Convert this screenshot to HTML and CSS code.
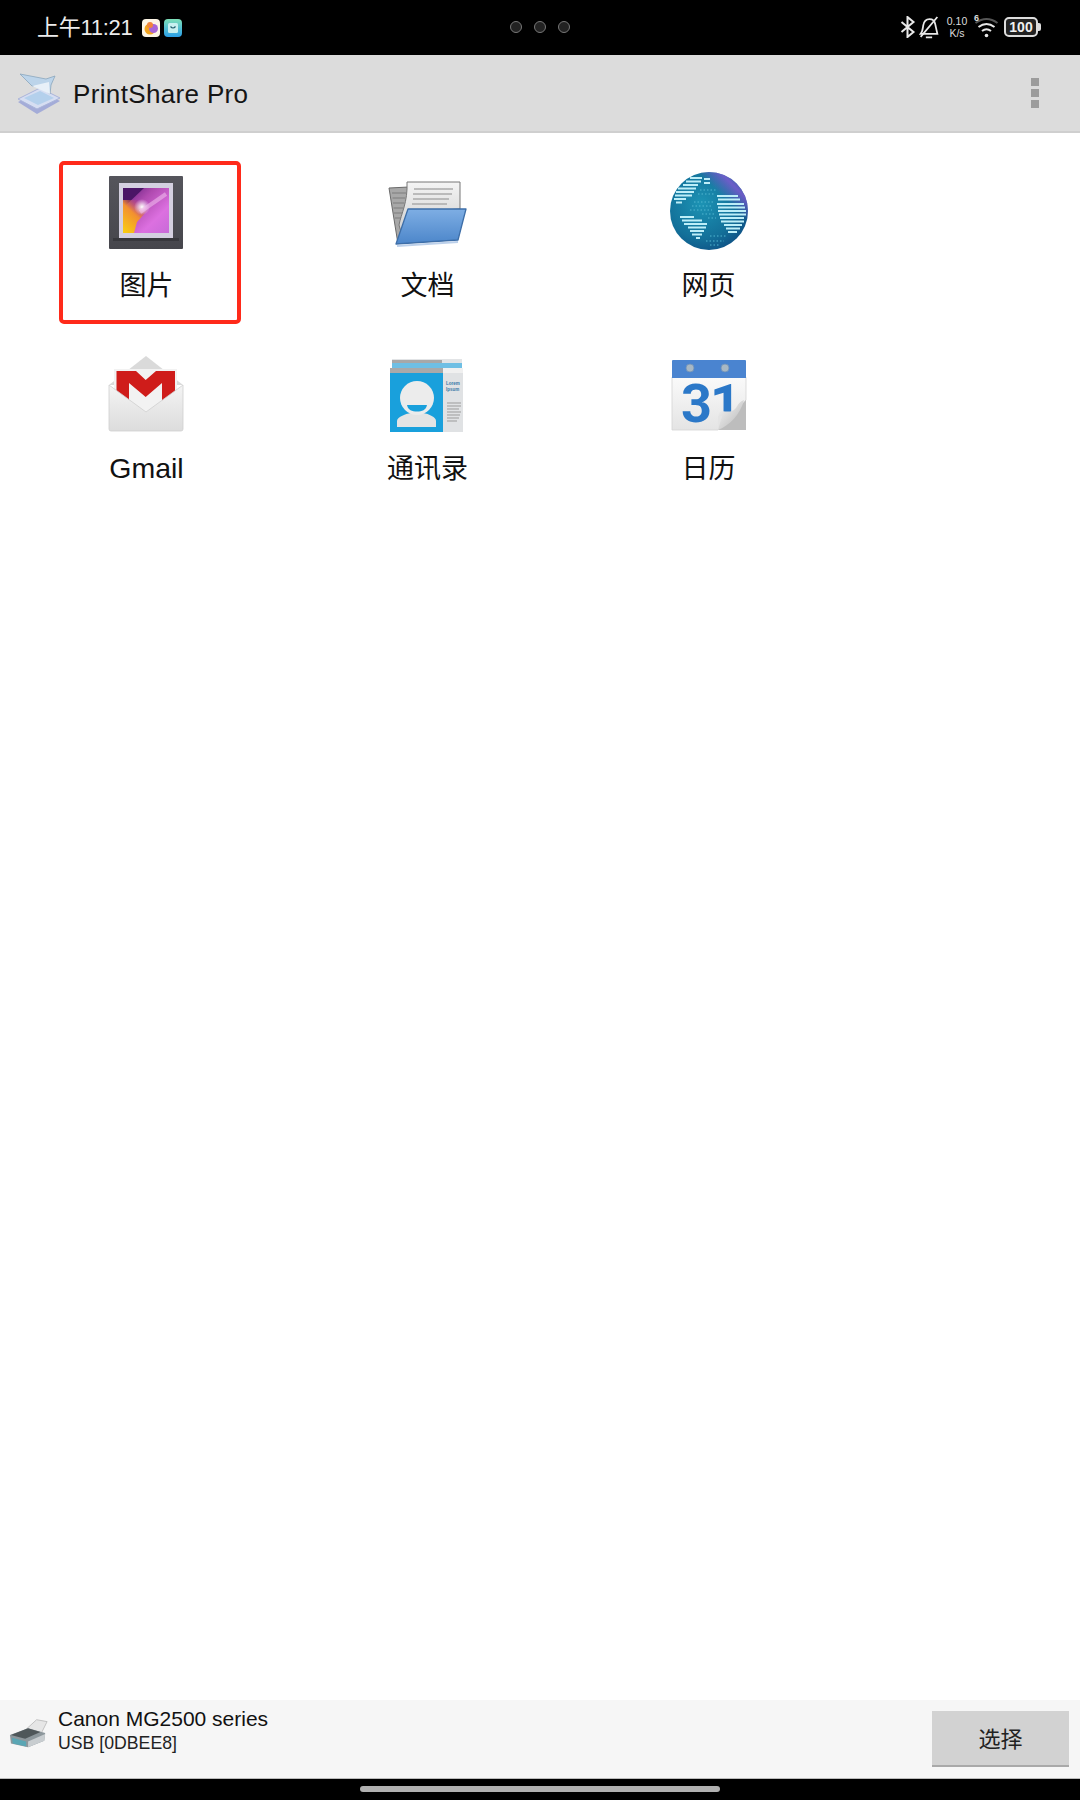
FILE: index.html
```html
<!DOCTYPE html>
<html lang="zh-CN">
<head>
<meta charset="utf-8">
<title>PrintShare Pro</title>
<link rel="stylesheet" href="styles.css">
</head>
<body>
<div class="page">
  <header class="status">
    <div class="status-left">
      <span class="clock">上午11:21</span>
      <svg class="mini" viewBox="0 0 18 18"><rect width="18" height="18" rx="4" fill="#fdf6e6"/><circle cx="8" cy="10" r="5.500" fill="#f2a41f"/><circle cx="11.500" cy="9.500" r="4.500" fill="#a866d8"/><circle cx="8" cy="6" r="3" fill="#f0853c"/></svg>
      <svg class="mini" viewBox="0 0 18 18"><defs><linearGradient id="mg" x1="0" y1="0" x2="0" y2="1"><stop offset="0" stop-color="#7fe0b8"/><stop offset="1" stop-color="#2a9fe8"/></linearGradient></defs><rect width="18" height="18" rx="4" fill="url(#mg)"/><rect x="4" y="4" width="10" height="10" rx="1.500" fill="#c8f0f0"/><path d="M6.500 7.500q2.500 3 5 0" fill="none" stroke="#22606e" stroke-width="1.200"/></svg>
    </div>
    <div class="cameras"><i></i><i></i><i></i></div>
    <div class="status-right">
      <svg class="st-bt" viewBox="0 0 16 22"><path d="M1.500 6l12 10-6 5V1l6 5-12 10" fill="none" stroke="#e8e8e8" stroke-width="2"/></svg>
      <svg class="st-bell" viewBox="0 0 18 22"><path d="M1 17c2-2 2-5 2.500-8 .5-3 2.500-6 6-6 3 0 5 2 5.500 5l2 9z" fill="none" stroke="#e8e8e8" stroke-width="1.700"/><path d="M6 20.500h6M1 20L17 1" stroke="#e8e8e8" stroke-width="1.700" fill="none"/></svg>
      <div class="speed"><span>0.10</span><span>K/s</span></div>
      <div class="wifi"><span class="wifi-n">6</span>
        <svg viewBox="0 0 24 22"><path d="M1 7q11-8 22 0" fill="none" stroke="#555" stroke-width="2"/><path d="M4 11q8-6 16 0" fill="none" stroke="#e8e8e8" stroke-width="2"/><path d="M7.500 15q4.500-3.500 9 0" fill="none" stroke="#e8e8e8" stroke-width="2"/><circle cx="12" cy="19.500" r="1.800" fill="#e8e8e8"/></svg>
      </div>
      <div class="battery"><span>100</span></div>
    </div>
  </header>

  <div class="appbar">
    <svg class="app-logo" viewBox="0 0 46 44">
      <path d="M2 31L24 20 44 30 21 43z" fill="#a4acd8"/>
      <path d="M2 28L24 17 44 27 21 38z" fill="#d6def2" stroke="#aab4da" stroke-width="1"/>
      <path d="M8 27L24 20 38 27 22 34z" fill="#b4d0ec"/>
      <path d="M4 3L30 8 39 5 35 14 34 23 27 17 16 15z" fill="#bcd4ea" stroke="#8aa6bc" stroke-width=".8"/>
      <path d="M16 15L33 11 34 23z" fill="#e8f0f8"/>
    </svg>
    <h1 class="app-title">PrintShare Pro</h1>
    <div class="overflow"><i></i><i></i><i></i></div>
  </div>

  <main class="content">
    <div class="grid">
      <div class="tile">
        <div class="highlight"></div>
        <svg class="icon" viewBox="0 0 80 80">
          <defs>
            <linearGradient id="pf" x1="0" y1="0" x2="0" y2="1"><stop offset="0" stop-color="#55555c"/><stop offset="1" stop-color="#46464c"/></linearGradient>
            <linearGradient id="pa" x1="0" y1="0" x2="1" y2="1"><stop offset="0" stop-color="#5a1a78"/><stop offset=".35" stop-color="#b04ab0"/><stop offset=".7" stop-color="#dc70e0"/><stop offset="1" stop-color="#c86ad8"/></linearGradient>
            <linearGradient id="pb" x1="0" y1="1" x2=".7" y2="0"><stop offset="0" stop-color="#fad010"/><stop offset=".6" stop-color="#f29030"/><stop offset="1" stop-color="#b03080" stop-opacity="0"/></linearGradient>
            <radialGradient id="pg"><stop offset="0" stop-color="#fff"/><stop offset="1" stop-color="#fff" stop-opacity="0"/></radialGradient>
          </defs>
          <rect x="3" y="6" width="74" height="73" rx="1" fill="url(#pf)"/>
          <rect x="7" y="68" width="66" height="3" fill="#38383d"/>
          <rect x="13" y="13" width="54" height="55" fill="#d4d0e0"/>
          <rect x="17" y="18" width="46" height="45" fill="url(#pa)"/>
          <path d="M17 18H38L17 38z" fill="#4a1566"/>
          <path d="M17 30L34 30 42 40 31 52 28 63H17z" fill="url(#pb)"/>
          <circle cx="36" cy="37" r="8" fill="url(#pg)"/>
          <path d="M34 42L60 24" stroke="#f4c0f0" stroke-width="4" opacity=".55"/>
        </svg>
        <span class="label">图片</span>
      </div>
      <div class="tile">
        <svg class="icon" viewBox="0 0 80 80">
          <defs>
            <linearGradient id="fb" x1="0" y1="0" x2="0" y2="1"><stop offset="0" stop-color="#7eaee4"/><stop offset="1" stop-color="#4c86ca"/></linearGradient>
            <linearGradient id="fp" x1="0" y1="0" x2="0" y2="1"><stop offset="0" stop-color="#f4f4f4"/><stop offset="1" stop-color="#d0d0d0"/></linearGradient>
          </defs>
          <path d="M2 18L22 17 15 62 11 74z" fill="#a8a8a8" stroke="#6a6a6a" stroke-width="1"/>
          <path d="M5 23H19M5.500 28H18M6 33H17M6.500 38H16M7 43H15M8 48H14" stroke="#8a8a8a" stroke-width="1.500"/>
          <path d="M20 12H73V39L23 42 14 62 12 55C14 44 21 32 20 12z" fill="url(#fp)" stroke="#777" stroke-width="1"/>
          <path d="M27 19H66M26 24H65M26 29H62M25 34H60" stroke="#aaa" stroke-width="1.700"/>
          <path d="M21 39H79L71 70 9 74z" fill="url(#fb)" stroke="#3d6ea8" stroke-width="1.300" stroke-linejoin="round"/>
          <path d="M10 76L71 72" stroke="#bcd0ea" stroke-width="2"/>
        </svg>
        <span class="label">文档</span>
      </div>
      <div class="tile">
        <svg class="icon" viewBox="0 0 80 80">
          <defs>
            <radialGradient id="gl" cx=".4" cy=".4" r=".7"><stop offset="0" stop-color="#1c93b4"/><stop offset=".65" stop-color="#137099"/><stop offset="1" stop-color="#0d4c82"/></radialGradient>
            <linearGradient id="gp" x1=".1" y1=".9" x2=".9" y2=".1"><stop offset=".72" stop-color="#8a58d8" stop-opacity="0"/><stop offset=".9" stop-color="#8a58d8" stop-opacity=".75"/><stop offset="1" stop-color="#8a58d8" stop-opacity=".3"/></linearGradient>
            <clipPath id="gc"><circle cx="41" cy="41" r="39"/></clipPath>
          </defs>
          <circle cx="41" cy="41" r="39" fill="url(#gl)"/>
          <circle cx="41" cy="41" r="39" fill="url(#gp)"/>
          <g clip-path="url(#gc)" stroke="#bdeef8" stroke-width="1.800">
            <path d="M22 8H34M36 9H42M18 11.500H33M36 13H42M15 15H30"/>
            <path d="M10 18.500H28M8 22H26M7 25.500H24M6 29H18M8 32.500H14"/>
            <path d="M49 26H70M50 29.500H72"/>
            <path d="M49 34H76M50 37.500H77M50 41H78M51 44.500H78M52 48H76M53 51.500H76M56 55H74M58 58.500H72M60 62H69"/>
            <path d="M12 47H26M14 50.500H34M16 54H39M20 57.500H38M22 61H36M24 64.500H34M28 68H32"/>
          </g>
          <g clip-path="url(#gc)" stroke="#52b6d0" stroke-width="1" stroke-dasharray="1.500 2">
            <path d="M26 32H46M24 36H44M22 40H44M34 44H46M40 48H48M30 24H46M32 20H48"/>
            <path d="M42 66H58M38 71H56M42 75H52"/>
          </g>
        </svg>
        <span class="label">网页</span>
      </div>
      <div class="tile">
        <svg class="icon" viewBox="0 0 80 80">
          <defs>
            <linearGradient id="me" x1="0" y1="0" x2="0" y2="1"><stop offset="0" stop-color="#f4f4f4"/><stop offset="1" stop-color="#dcdcdc"/></linearGradient>
          </defs>
          <path d="M3 32L40 3 77 32z" fill="#dadada"/>
          <rect x="8" y="16" width="63" height="44" fill="#f2f2f2"/>
          <path d="M10.500 18H30L39.700 27 50 18H69V52H56V30L39.700 44 23 30V52H10.500z" fill="#cf1c1a"/>
          <path d="M3 32L40 59 77 32V76a2 2 0 0 1-2 2H5a2 2 0 0 1-2-2z" fill="url(#me)" stroke="#cfcfcf" stroke-width=".8"/>
        </svg>
        <span class="label label-latin">Gmail</span>
      </div>
      <div class="tile">
        <svg class="icon" viewBox="0 0 80 80">
          <rect x="5" y="6" width="70" height="12" fill="#e2e4e6"/>
          <rect x="5" y="7" width="50" height="3" fill="#a8a8a8"/>
          <rect x="5" y="10" width="70" height="6" fill="#6fbfe4"/>
          <rect x="3" y="15" width="73" height="64" fill="#e0e2e4"/>
          <rect x="3" y="15" width="53" height="64" fill="#19a0dc"/>
          <rect x="3" y="15" width="53" height="5" fill="#a9a9a9"/>
          <rect x="56" y="15" width="20" height="5" fill="#f0f0f0"/>
          <path d="M10 74V68C10 64 18 61 24 60H36C42 61 49 64 49 68V74z" fill="#e4e4e4"/>
          <circle cx="30" cy="45" r="17" fill="#ececec"/>
          <path d="M20 52H40C39 57 35 58.500 30 58.500 25 58.500 21 57 20 52z" fill="#19a0dc"/>
          <text class="mini-text" x="59" y="32">Lorem</text>
          <text class="mini-text" x="59" y="38">Ipsum</text>
          <path d="M60 50H74M60 53H74M60 56H72M60 59H74M60 62H73M60 65H72M60 68H70" stroke="#9b9b9b" stroke-width="1"/>
        </svg>
        <span class="label">通讯录</span>
      </div>
      <div class="tile">
        <svg class="icon" viewBox="0 0 80 80">
          <defs>
            <linearGradient id="cb" x1="0" y1="0" x2="0" y2="1"><stop offset="0" stop-color="#fafafa"/><stop offset="1" stop-color="#e4e4e4"/></linearGradient>
            <linearGradient id="cc" x1="0" y1="0" x2="1" y2="1"><stop offset="0" stop-color="#f8f8f8"/><stop offset="1" stop-color="#b4b4b4"/></linearGradient>
          </defs>
          <path d="M4 24H78V47L50 77H4z" fill="url(#cb)" stroke="#d4d4d4" stroke-width=".8"/>
          <path d="M5 7H77a1 1 0 0 1 1 1V25H4V8a1 1 0 0 1 1-1z" fill="#4a84d0"/>
          <circle cx="22" cy="15" r="4" fill="#a8b8c4" stroke="#6f90b8" stroke-width=".8"/>
          <circle cx="57" cy="15" r="4" fill="#a8b8c4" stroke="#6f90b8" stroke-width=".8"/>
          <text class="cal-num" x="13" y="69">3</text>
          <text class="cal-num" x="42" y="69">1</text>
          <path d="M78 47V77H50z" fill="#bdbdbd"/>
          <path d="M76 47C68 50 70 56 64 58 58 60 54 56 51 60 49 66 51 72 50 77 62 72 72 62 76 47z" fill="url(#cc)"/>
          <path d="M54 63H50V77z" fill="#e4e4e4"/>
        </svg>
        <span class="label">日历</span>
      </div>
    </div>
  </main>

  <footer class="printer-bar">
    <svg class="printer-icon" viewBox="0 0 42 32">
      <path d="M18 11L29 1 40 3 34 15z" fill="#e6e6e6" stroke="#b4b4b4" stroke-width=".8"/>
      <path d="M1 17L20 10 38 15 37 23 20 30 2 26z" fill="#8d979c"/>
      <path d="M2 17L20 10 33 14 17 21z" fill="#4f575a"/>
      <path d="M3 20L18 24 18 29 4 26z" fill="#5aa6b4"/>
      <path d="M20 24L38 16 37 23 20 30z" fill="#c8cdd0"/>
    </svg>
    <div class="printer-text">
      <div class="printer-name">Canon MG2500 series</div>
      <div class="printer-port">USB [0DBEE8]</div>
    </div>
    <button class="select-btn" type="button">选择</button>
  </footer>

  <div class="navbar"><div class="pill"></div></div>
</div>
</body>
</html>
```

FILE: styles.css
```css
* { box-sizing: border-box; }
html, body { margin: 0; padding: 0; background: #fff; }
body { font-family: "Liberation Sans", "Noto Sans CJK SC", sans-serif; color: #111; }
.page { width: 1080px; height: 1800px; display: flex; flex-direction: column; overflow: hidden; }

.status { height: 55px; flex: none; background: #000; position: relative; display: flex; align-items: center; justify-content: space-between; padding: 0 42px 1px 37px; color: #ececec; }
.status-left { display: flex; align-items: center; gap: 4px; }
.clock { font-size: 22px; line-height: 26px; margin: 1px 6px 0 0; letter-spacing: -0.3px; }
.mini { width: 18px; height: 18px; display: block; margin-top: 1px; }
.cameras { position: absolute; left: 510px; top: 21px; display: flex; gap: 12px; }
.cameras i { width: 12px; height: 12px; border-radius: 50%; background: #222; border: 1.500px solid #777; display: block; }
.status-right { display: flex; align-items: center; }
.st-bt { width: 16px; height: 22px; display: block; }
.st-bell { width: 20px; height: 23px; margin-left: 3px; display: block; }
.speed { width: 22px; margin-left: 7px; display: flex; flex-direction: column; align-items: center; font-size: 10.500px; line-height: 12px; color: #ddd; }
.wifi { position: relative; width: 25px; height: 22px; margin-left: 6px; }
.wifi svg { width: 25px; height: 22px; display: block; }
.wifi-n { position: absolute; left: 0; top: -3px; font-size: 9px; line-height: 10px; font-weight: bold; color: #ddd; }
.battery { position: relative; width: 34px; height: 20px; margin-left: 5px; border: 2px solid #ddd; border-radius: 5px; display: flex; align-items: center; justify-content: center; background: #222; }
.battery::after { content: ""; position: absolute; right: -5px; top: 4px; width: 3px; height: 8px; background: #ddd; border-radius: 0 2px 2px 0; }
.battery span { font-size: 14px; font-weight: bold; color: #f0f0f0; }

.appbar { height: 78px; flex: none; background: #dcdcdc; border-bottom: 2px solid #cfcfcf; display: flex; align-items: center; padding: 0 41px 0 16px; }
.app-logo { width: 46px; height: 44px; display: block; flex: none; }
.app-title { margin: 3px 0 0 11px; font-size: 26px; letter-spacing: .35px; font-weight: normal; flex: 1; color: #151515; }
.overflow { display: flex; flex-direction: column; gap: 3px; }
.overflow i { width: 8px; height: 8px; background: #9c9c9c; display: block; }

.content { flex: 1; background: #fff; padding: 37px 0 0 6px; }
.grid { display: grid; grid-template-columns: repeat(3, 281px); row-gap: 49px; }
.tile { position: relative; display: flex; flex-direction: column; align-items: center; height: 134px; }
.icon { width: 80px; height: 80px; display: block; margin-right: 2px; overflow: visible; }
.label { margin-top: 18px; font-size: 27px; line-height: 36px; color: #111; }
.label-latin { font-size: 28.500px; margin-top: 17px; }
.highlight { position: absolute; left: 53px; top: -9px; width: 182px; height: 163px; border: 4px solid #ff2a1a; border-radius: 5px; }
.mini-text { font-family: "Liberation Sans", sans-serif; font-size: 4.500px; font-weight: bold; fill: #3a78a8; }
.cal-num { font-family: Roboto, "Liberation Sans", sans-serif; font-size: 54px; font-weight: 700; fill: #2b78c8; }

.printer-bar { height: 78px; flex: none; background: #f6f6f6; display: flex; align-items: center; padding: 0 11px 0 9px; }
.printer-icon { width: 40px; height: 32px; display: block; flex: none; margin-bottom: 11px; }
.printer-text { flex: 1; margin-left: 9px; padding-bottom: 18px; }
.printer-name { font-size: 21px; line-height: 26px; color: #111; }
.printer-port { font-size: 17.700px; line-height: 22px; color: #222; }
.select-btn { width: 137px; height: 56px; border: 0; border-bottom: 2px solid #a9a9a9; background: #d2d2d2; font: inherit; font-size: 22px; color: #222; padding: 0 0 2px; }

.navbar { height: 22px; flex: none; background: #000; border-top: 1px solid #bbb; display: flex; align-items: flex-start; justify-content: center; padding-top: 7px; }
.pill { width: 360px; height: 6px; border-radius: 3px; background: #b0b0b0; }
```
